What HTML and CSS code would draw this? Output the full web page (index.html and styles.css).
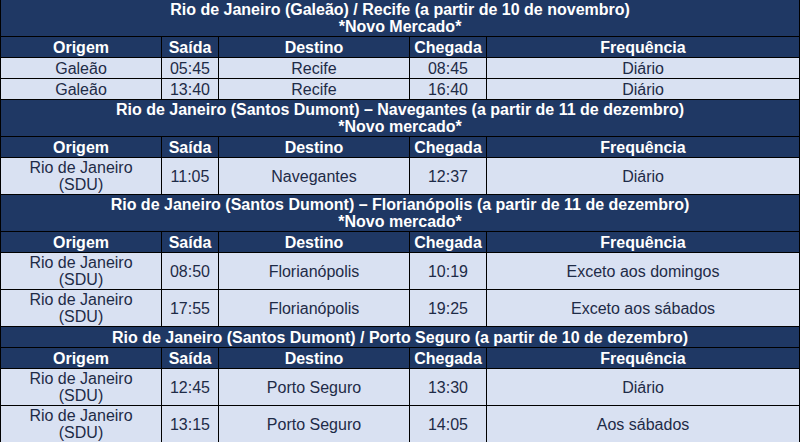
FILE: index.html
```html
<!DOCTYPE html>
<html lang="pt">
<head>
<meta charset="utf-8">
<title>Voos</title>
<link rel="stylesheet" href="styles.css">
</head>
<body>
<table class="voos">
  <colgroup>
    <col class="c-orig"><col class="c-sai"><col class="c-dest"><col class="c-cheg"><col class="c-freq">
  </colgroup>
  <tbody>
    <tr class="r2"><td class="title first" colspan="5">Rio de Janeiro (Galeão) / Recife (a partir de 10 de novembro)<br>*Novo Mercado*</td></tr>
    <tr class="r1"><td class="hd">Origem</td><td class="hd">Saída</td><td class="hd">Destino</td><td class="hd">Chegada</td><td class="hd">Frequência</td></tr>
    <tr class="r1"><td>Galeão</td><td>05:45</td><td>Recife</td><td>08:45</td><td>Diário</td></tr>
    <tr class="r1"><td>Galeão</td><td>13:40</td><td>Recife</td><td>16:40</td><td>Diário</td></tr>

    <tr class="r2"><td class="title" colspan="5">Rio de Janeiro (Santos Dumont) – Navegantes (a partir de 11 de dezembro)<br>*Novo mercado*</td></tr>
    <tr class="r1"><td class="hd">Origem</td><td class="hd">Saída</td><td class="hd">Destino</td><td class="hd">Chegada</td><td class="hd">Frequência</td></tr>
    <tr class="r2"><td>Rio de Janeiro<br>(SDU)</td><td>11:05</td><td>Navegantes</td><td>12:37</td><td>Diário</td></tr>

    <tr class="r2"><td class="title" colspan="5">Rio de Janeiro (Santos Dumont) – Florianópolis (a partir de 11 de dezembro)<br>*Novo mercado*</td></tr>
    <tr class="r1"><td class="hd">Origem</td><td class="hd">Saída</td><td class="hd">Destino</td><td class="hd">Chegada</td><td class="hd">Frequência</td></tr>
    <tr class="r2"><td>Rio de Janeiro<br>(SDU)</td><td>08:50</td><td>Florianópolis</td><td>10:19</td><td>Exceto aos domingos</td></tr>
    <tr class="r2"><td>Rio de Janeiro<br>(SDU)</td><td>17:55</td><td>Florianópolis</td><td>19:25</td><td>Exceto aos sábados</td></tr>

    <tr class="r1"><td class="title" colspan="5">Rio de Janeiro (Santos Dumont) / Porto Seguro (a partir de 10 de dezembro)</td></tr>
    <tr class="r1"><td class="hd">Origem</td><td class="hd">Saída</td><td class="hd">Destino</td><td class="hd">Chegada</td><td class="hd">Frequência</td></tr>
    <tr class="r2"><td>Rio de Janeiro<br>(SDU)</td><td>12:45</td><td>Porto Seguro</td><td>13:30</td><td>Diário</td></tr>
    <tr class="r2"><td>Rio de Janeiro<br>(SDU)</td><td>13:15</td><td>Porto Seguro</td><td>14:05</td><td>Aos sábados</td></tr>
  </tbody>
</table>
</body>
</html>
```

FILE: styles.css
```css
html, body {
  margin: 0;
  padding: 0;
  background: #ffffff;
}

.voos {
  border-collapse: collapse;
  table-layout: fixed;
  width: 799px;
  font-family: "Liberation Sans", Arial, sans-serif;
  font-size: 16px;
}

.c-orig { width: 161px; }
.c-sai { width: 57px; }
.c-dest { width: 191px; }
.c-cheg { width: 77px; }
.c-freq { width: 313px; }

.voos td {
  border: 1px solid #000000;
  padding: 0;
  text-align: center;
  vertical-align: middle;
  line-height: 17px;
  background: #d9e1f2;
  color: #1e2b47;
  white-space: nowrap;
  overflow: hidden;
}

.voos .r1 td { height: 20px; }
.voos .r2 td { height: 36px; }

.voos td.title,
.voos td.hd {
  background: #1f3864;
  color: #ffffff;
  font-weight: bold;
}

.voos td.first {
  border-top-style: hidden;
}
```
